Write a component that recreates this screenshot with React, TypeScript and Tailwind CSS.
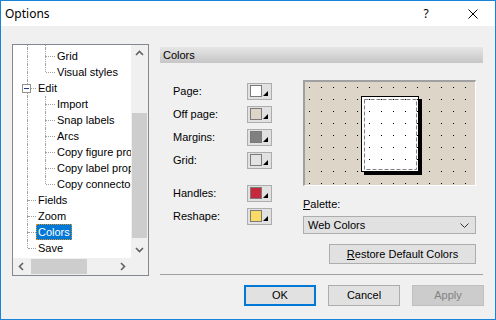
import type { ReactNode } from "react";

const LINE = "border-l border-dotted border-[#a0a0a0]";

type Seg = { top?: boolean; bottom?: boolean; horiz?: boolean; box?: boolean };

function Cell({ seg, level }: { seg: Seg; level: 0 | 1 }) {
  const size = level === 0 ? "w-[23px] pl-[14px]" : "w-[19px] pl-[9px]";
  return (
    <div className={`relative flex h-full shrink-0 ${size}`}>
      <div className="flex h-full w-px flex-col">
        <div className={`h-[8px] ${seg.top ? LINE : ""}`} />
        <div className={`flex-1 ${seg.bottom ? LINE : ""}`} />
      </div>
      {seg.horiz && (
        <div className="flex-1 pt-[8px]">
          <div className="w-full border-t border-dotted border-[#a0a0a0]" />
        </div>
      )}
      {seg.box && (
        <div className="absolute left-[9px] top-[4px] flex h-[9px] w-[9px] items-center justify-center border border-[#919191] bg-white">
          <div className="h-px w-[5px] bg-[#1e3c8c]" />
        </div>
      )}
    </div>
  );
}

const V: Seg = { top: true, bottom: true };
const TEE: Seg = { top: true, bottom: true, horiz: true };
const ELL: Seg = { top: true, horiz: true };

const ROWS: { label: string; cells: Seg[]; selected?: boolean }[] = [
  { label: "Grid", cells: [V, TEE] },
  { label: "Visual styles", cells: [V, ELL] },
  { label: "Edit", cells: [{ ...TEE, box: true }] },
  { label: "Import", cells: [V, TEE] },
  { label: "Snap labels", cells: [V, TEE] },
  { label: "Arcs", cells: [V, TEE] },
  { label: "Copy figure properties", cells: [V, TEE] },
  { label: "Copy label properties", cells: [V, TEE] },
  { label: "Copy connector properties", cells: [V, ELL] },
  { label: "Fields", cells: [TEE] },
  { label: "Zoom", cells: [TEE] },
  { label: "Colors", cells: [TEE], selected: true },
  { label: "Save", cells: [ELL] },
];

function Chevron({ dir }: { dir: "up" | "down" | "left" | "right" }) {
  const pts = {
    up: "1,5 4.5,1.5 8,5",
    down: "1,2 4.5,5.5 8,2",
    left: "5,1 1.5,4.5 5,8",
    right: "2,1 5.5,4.5 2,8",
  }[dir];
  const horiz = dir === "left" || dir === "right";
  return (
    <svg width={horiz ? 7 : 9} height={horiz ? 9 : 7} viewBox={horiz ? "0 0 7 9" : "0 0 9 7"}>
      <polyline points={pts} fill="none" stroke="#606060" strokeWidth="1.6" />
    </svg>
  );
}

function Tree() {
  return (
    <div className="flex h-[232px] w-[137px] shrink-0 flex-col border border-[#828790] bg-white">
      <div className="flex h-[213px]">
        <div className="flex-1 overflow-hidden">
          <div className="flex h-[3px]">
            <Cell seg={V} level={0} />
            <Cell seg={V} level={1} />
          </div>
          {ROWS.map((r) => (
            <div key={r.label} className="flex h-[16px] items-stretch whitespace-nowrap">
              {r.cells.map((c, i) => (
                <Cell key={i} seg={c} level={i as 0 | 1} />
              ))}
              <span
                className={
                  r.selected
                    ? "h-[16px] bg-[#0078d7] px-[2px] leading-[16px] text-white outline outline-1 -outline-offset-1 outline-dotted outline-[#d8902c]"
                    : "px-[2px] leading-[16px]"
                }
              >
                {r.label}
              </span>
            </div>
          ))}
        </div>
        <div className="flex w-[17px] flex-col bg-[#f0f0f0]">
          <div className="flex h-[17px] items-center justify-center">
            <Chevron dir="up" />
          </div>
          <div className="flex-1 px-px pt-[51px] pb-[3px]">
            <div className="h-full bg-[#cdcdcd]" />
          </div>
          <div className="flex h-[17px] items-center justify-center">
            <Chevron dir="down" />
          </div>
        </div>
      </div>
      <div className="flex h-[17px] bg-[#f0f0f0]">
        <div className="flex flex-1">
          <div className="flex w-[17px] items-center justify-center">
            <Chevron dir="left" />
          </div>
          <div className="flex-1 py-px pl-px">
            <div className="h-full w-[56px] bg-[#cdcdcd]" />
          </div>
          <div className="flex w-[17px] items-center justify-center">
            <Chevron dir="right" />
          </div>
        </div>
        <div className="w-[17px]" />
      </div>
    </div>
  );
}

function Swatch({ label, color, className = "" }: { label: string; color: string; className?: string }) {
  return (
    <div className={`flex h-[17px] items-center ${className}`}>
      <span className="w-[74px]">{label}</span>
      <div className="flex h-[17px] w-[25px] items-end border border-[#adadad] bg-[#e1e1e1] pb-[2px] pl-[2px]">
        <div className="h-[12px] w-[12px] border border-[#7a7a7a]" style={{ background: color }} />
        <svg width="5" height="5" viewBox="0 0 5 5" className="mb-px ml-px">
          <polygon points="5,0 5,5 0,5" fill="#000" />
        </svg>
      </div>
    </div>
  );
}

function Preview() {
  const dots: ReactNode[] = [];
  for (let x = 4; x < 170; x += 12)
    for (let y = 5; y < 103; y += 12) dots.push(<rect key={`${x}-${y}`} x={x} y={y} width="1" height="1" fill="#000" />);
  return (
    <div className="h-[106px] w-[173px] border-b border-l-2 border-r border-t-2 border-b-white border-l-[#a0a0a0] border-r-white border-t-[#a0a0a0]">
      <svg width="170" height="103" viewBox="0 0 170 103" className="block">
        <rect width="170" height="103" fill="#ddd5c8" />
        <rect x="59" y="17" width="58" height="76" fill="#000" />
        <rect x="56.5" y="14.5" width="57" height="75" fill="#fff" stroke="#000" />
        <rect x="59.5" y="17.5" width="52" height="70" fill="none" stroke="#808080" strokeDasharray="4 2" />
        {dots}
      </svg>
    </div>
  );
}

function Button({ children, kind = "normal" }: { children: ReactNode; kind?: "default" | "normal" | "disabled" }) {
  const look =
    kind === "default"
      ? "border-2 border-[#0078d7] bg-[#e1e1e1] text-black"
      : kind === "disabled"
        ? "border border-[#bfbfbf] bg-[#cccccc] text-[#838383]"
        : "border border-[#adadad] bg-[#e1e1e1] text-black";
  return <div className={`flex h-[21px] w-[72px] items-center justify-center ${look}`}>{children}</div>;
}

export default function App() {
  return (
    <div className="flex h-[320px] w-[496px] flex-col border border-[#1883d7] bg-[#f0f0f0] font-['Liberation_Sans',Arial,sans-serif] text-[11px] text-black">
      {/* Title bar */}
      <div className="flex h-[25px] shrink-0 items-center bg-white pl-[4px]">
        <span className="font-['Noto_Sans',sans-serif] text-[12px]">Options</span>
        <div className="ml-auto flex h-full w-[46px] items-center justify-center font-['Noto_Sans',sans-serif] text-[12px]">?</div>
        <div className="flex h-full w-[46px] items-center justify-center pl-px">
          <svg width="10" height="10" viewBox="0 0 10 10">
            <path d="M0.5 0.5L9.5 9.5M9.5 0.5L0.5 9.5" stroke="#000" strokeWidth="1" />
          </svg>
        </div>
      </div>

      {/* Body */}
      <div className="flex pl-[11px] pt-[18px]">
        <Tree />
        <div className="ml-[11px] flex h-[232px] w-[323px] flex-col pt-[3px]">
          <div className="h-[16px] bg-gradient-to-b from-[#e6e6e6] to-[#c6c6c6] pl-[3px] leading-[16px]">Colors</div>
          <div className="flex flex-1">
            <div className="flex w-[143px] flex-col gap-[6px] pl-[13px] pt-[20px]">
              <Swatch label="Page:" color="#ffffff" />
              <Swatch label="Off page:" color="#ddd5c8" />
              <Swatch label="Margins:" color="#808080" />
              <Swatch label="Grid:" color="#e3e3e3" />
              <Swatch label="Handles:" color="#c8283c" className="mt-[10px]" />
              <Swatch label="Reshape:" color="#ffd966" />
            </div>
            <div className="flex w-[173px] flex-col pt-[17px]">
              <Preview />
              <div className="mt-[12px] h-[12px] leading-[12px]">
                <span className="underline">P</span>alette:
              </div>
              <div className="mt-[6px] flex h-[18px] items-center border border-[#adadad] bg-[#e1e1e1] pl-[4px] pr-[6px]">
                <span>Web Colors</span>
                <svg width="9" height="5" viewBox="0 0 9 5" className="ml-auto">
                  <polyline points="0.5,0.5 4.5,4.5 8.5,0.5" fill="none" stroke="#333" strokeWidth="1" />
                </svg>
              </div>
              <div className="ml-auto mt-[10px] flex h-[20px] w-[147px] items-center justify-center border border-[#adadad] bg-[#e1e1e1]">
                <span>
                  <span className="underline">R</span>estore Default Colors
                </span>
              </div>
            </div>
          </div>
          <div className="mb-[1px] h-px bg-[#a0a0a0]" />
        </div>
      </div>

      {/* Buttons */}
      <div className="mt-[9px] flex justify-end gap-[12px] pr-[11px]">
        <Button kind="default">OK</Button>
        <Button>Cancel</Button>
        <Button kind="disabled">Apply</Button>
      </div>
    </div>
  );
}
